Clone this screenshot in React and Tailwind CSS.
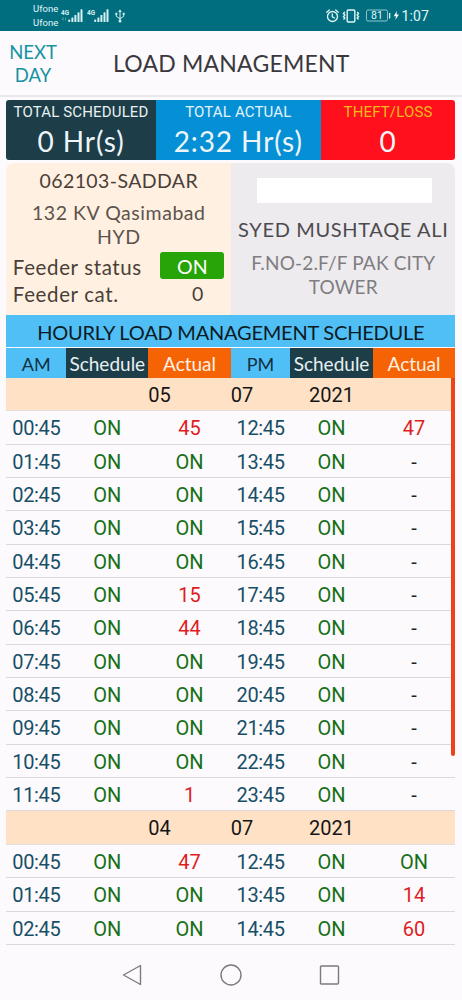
import React from "react";
import clsx from "clsx";

const days = [
  {
    date: ["05", "07", "2021"],
    rows: [
      ["00:45", "ON", "45", "12:45", "ON", "47"],
      ["01:45", "ON", "ON", "13:45", "ON", "-"],
      ["02:45", "ON", "ON", "14:45", "ON", "-"],
      ["03:45", "ON", "ON", "15:45", "ON", "-"],
      ["04:45", "ON", "ON", "16:45", "ON", "-"],
      ["05:45", "ON", "15", "17:45", "ON", "-"],
      ["06:45", "ON", "44", "18:45", "ON", "-"],
      ["07:45", "ON", "ON", "19:45", "ON", "-"],
      ["08:45", "ON", "ON", "20:45", "ON", "-"],
      ["09:45", "ON", "ON", "21:45", "ON", "-"],
      ["10:45", "ON", "ON", "22:45", "ON", "-"],
      ["11:45", "ON", "1", "23:45", "ON", "-"],
    ],
  },
  {
    date: ["04", "07", "2021"],
    rows: [
      ["00:45", "ON", "47", "12:45", "ON", "ON"],
      ["01:45", "ON", "ON", "13:45", "ON", "14"],
      ["02:45", "ON", "ON", "14:45", "ON", "60"],
    ],
  },
];

const columns = "grid grid-cols-[60px_82px_82.5px_59.5px_82.5px_82.5px]";

const cellColor = (value) => {
  if (value === "ON") return "text-[#176f17]";
  if (value === "-") return "text-[#222222]";
  return value.includes(":") ? "text-[#174f66] tracking-[-0.35px]" : "text-[#df1d1f]";
};

const Signal = ({ dim }) => (
  <svg width="22" height="16" viewBox="0 0 22 16" fill="#d5f1f3">
    <text x="0" y="6.5" fontSize="7" fontWeight="700" fontFamily="Roboto" textLength="8" lengthAdjust="spacingAndGlyphs">4G</text>
    {dim && <path d="M2 9v3m-1-1 1 1.5M4.5 12.500V9.500" stroke="#4d9fae" strokeWidth="1" fill="none" />}
    <rect x="7.200" y="11.500" width="2" height="2.500" rx=".8" />
    <rect x="10.400" y="9.500" width="2" height="4.500" rx=".6" />
    <rect x="13.400" y="7" width="2" height="7" rx=".6" />
    <rect x="16.500" y="4.300" width="2" height="9.700" rx=".6" />
    <rect x="19.500" y="1.200" width="2" height="12.800" rx=".6" />
  </svg>
);

const UsbIcon = () => (
  <svg width="10" height="14" viewBox="0 0 10 14" fill="none" stroke="#d5f1f3" strokeWidth="1">
    <path d="M5 2v10M1.300 5v2.300L5 9.800M8.700 5v2.300L5 9.800" />
    <path d="M3.300 3 5 .3 6.700 3zM.3 3.800h2v2h-2zM7.700 3.800h2v2h-2z" fill="#d5f1f3" stroke="none" />
    <circle cx="5" cy="12" r="1.500" fill="#d5f1f3" stroke="none" />
  </svg>
);

const AlarmIcon = () => (
  <svg width="13" height="14" viewBox="0 0 13 14" fill="none" stroke="#e3f6f7" strokeWidth="1.300" strokeLinecap="round">
    <circle cx="6.500" cy="7.500" r="5" />
    <path d="M6.300 4.800v3l2.200 1.200M.8 3.200l2.500-2.200M12.200 3.200 9.700 1" />
  </svg>
);

const VibrateIcon = () => (
  <svg width="18" height="14" viewBox="0 0 18 14" fill="none" stroke="#e3f6f7" strokeWidth="1.400">
    <rect x="5.200" y="1" width="7.600" height="12" rx="1" />
    <path d="M2.800 3 1.500 4.500l1.300 1.500-1.300 1.500 1.300 1.500-1.300 1.500M15.200 3l1.300 1.500L15.200 6l1.300 1.500L15.200 9l1.300 1.500" />
  </svg>
);

const BatteryIcon = () => (
  <svg width="34" height="13" viewBox="0 0 34 13">
    <rect x=".5" y="1" width="21" height="11" rx="1.500" fill="none" stroke="#8fc6ce" />
    <rect x="23" y="4" width="1.300" height="5.500" fill="#d5f1f3" />
    <text x="11" y="10.400" textAnchor="middle" fontSize="10.500" fontFamily="Roboto" fill="#e3f6f7">81</text>
    <path d="M30.800 2 27.800 7.200h2.200L29.300 11l3.600-5.400h-2.300z" fill="#fff" />
  </svg>
);

const StatusBar = () => (
  <div className="h-[31px] shrink-0 bg-[#006e7f] flex items-center text-[#e3f6f7]">
    <div className="ml-[33px] w-[27px] text-[9.500px] leading-[13.500px] whitespace-nowrap">
      <p>Ufone</p>
      <p>Ufone</p>
    </div>
    <div className="ml-[1px] flex items-center gap-1">
      <Signal dim />
      <Signal />
    </div>
    <div className="ml-[6px]"><UsbIcon /></div>
    <div className="ml-auto mr-[33px] flex items-center">
      <AlarmIcon />
      <span className="ml-[3px]"><VibrateIcon /></span>
      <span className="ml-[6px]"><BatteryIcon /></span>
      <span className="ml-[2px] text-[14px] leading-none tracking-[0.1px]">1:07</span>
    </div>
  </div>
);

const Total = ({ label, value, className }) => (
  <div className={clsx("pt-[3px] text-center whitespace-nowrap", className)}>
    <p className="text-[15px] leading-[19px] tracking-[0.15px]">{label}</p>
    <p className="mt-[3px] font-['Lato'] text-[28px] leading-[32px] tracking-[0.900px] text-[#eef5f8]">{value}</p>
  </div>
);

const HeadCell = ({ children, className }) => (
  <div className={clsx("text-center whitespace-nowrap", className)}>{children}</div>
);

const DateRow = ({ date }) => (
  <div className={clsx(columns, "h-[33.350px] bg-[#ffe2c6] border-b border-[#e2dfdd] leading-[35px] text-[#151515]")}>
    <span className="col-start-3">{date[0]}</span>
    <span className="col-start-4">{date[1]}</span>
    <span className="col-start-5 text-center">{date[2]}</span>
  </div>
);

const Row = ({ cells }) => (
  <div className={clsx(columns, "h-[33.350px] border-b border-[#dadade] leading-[35px] text-center")}>
    {cells.map((value, i) => (
      <span key={i} className={cellColor(value)}>{value}</span>
    ))}
  </div>
);

const App = () => {
  return (
    <div className="w-[462px] h-[1000px] overflow-hidden bg-[#fcfafd] font-['Roboto',sans-serif] flex flex-col">
      <StatusBar />

      <header className="h-[66px] shrink-0 border-b-2 border-[#e9e7e9] flex items-center font-['Lato']">
        <button className="w-[66px] text-center text-[18.500px] leading-[23px] text-[#1592a3] pt-[1px]">
          NEXT<br />DAY
        </button>
        <h1 className="ml-[47px] pt-[1px] text-[23px] tracking-[0.200px] text-[#3a383c] whitespace-nowrap">LOAD MANAGEMENT</h1>
      </header>

      <main className="ml-[6.300px] mt-[3px] w-[449px]">
        <section className="h-[60px] flex rounded-[3px] overflow-hidden">
          <Total label="TOTAL SCHEDULED" value="0 Hr(s)" className="w-[149.500px] bg-[#1d3e48] text-[#e8f0f2]" />
          <Total label="TOTAL ACTUAL" value="2:32 Hr(s)" className="w-[165px] bg-[#0590d6] text-[#e2f3fb]" />
          <Total label="THEFT/LOSS" value="0" className="flex-1 bg-[#ff101c] text-[#f5b81c]" />
        </section>

        <section className="mt-[3px] h-[152px] flex font-['Lato']">
          <div className="w-[225px] bg-[#fff0e1] rounded-tl-[8px] text-[19.500px] text-[#4a3f38] whitespace-nowrap">
            <p className="mt-[6px] text-center leading-[24px] tracking-[0.400px]">062103-SADDAR</p>
            <p className="mt-[8px] text-center leading-[24px] tracking-[0.550px] text-[#5c534d]">132 KV Qasimabad<br />HYD</p>
            <div className="mt-[3px] pl-[6.500px] pr-[7px] flex justify-between items-center h-[27px]">
              <span className="pt-[3px] text-[20.500px] tracking-[0.630px]">Feeder status</span>
              <span className="w-[64px] h-[27px] leading-[29px] rounded-[3px] bg-[#27a508] text-white text-center">ON</span>
            </div>
            <div className="pl-[6.500px] pt-[3px] flex items-center h-[27px]">
              <span className="text-[20.500px] tracking-[0.630px]">Feeder cat.</span>
              <span className="ml-auto mr-[28px]">0</span>
            </div>
          </div>
          <div className="flex-1 bg-[#edebee] rounded-tr-[8px] text-center whitespace-nowrap">
            <div className="mt-[15px] ml-[26px] w-[175px] h-[25px] bg-white" />
            <p className="mt-[14px] text-[20px] leading-[24px] tracking-[0.650px] text-[#4c4a4e]">SYED MUSHTAQE ALI</p>
            <p className="mt-[10px] text-[19px] leading-[24px] tracking-[0.150px] text-[#7f7d81]">F.NO-2.F/F PAK CITY<br />TOWER</p>
          </div>
        </section>

        <h2 className="h-[32px] bg-[#4fbff6] text-center font-['Lato'] text-[20px] leading-[34px] tracking-[-0.220px] text-[#0c1a22] whitespace-nowrap">
          HOURLY LOAD MANAGEMENT SCHEDULE
        </h2>

        <div className={clsx(columns, "mt-[1px] h-[30px] font-['Lato'] text-[19px] leading-[32px]")}>
          <HeadCell className="bg-[#4fbff6] text-[18px] text-[#12303f]">AM</HeadCell>
          <HeadCell className="bg-[#1d3e48] text-[#e8f0f2]">Schedule</HeadCell>
          <HeadCell className="bg-[#f66305] text-[#fff0e2]">Actual</HeadCell>
          <HeadCell className="bg-[#4fbff6] text-[18px] text-[#12303f]">PM</HeadCell>
          <HeadCell className="bg-[#1d3e48] text-[#e8f0f2]">Schedule</HeadCell>
          <HeadCell className="bg-[#f66305] text-[#fff0e2]">Actual</HeadCell>
        </div>

        <div className="relative text-[20px]">
          {days.map((day) => (
            <div key={day.date[0]}>
              <DateRow date={day.date} />
              {day.rows.map((cells) => (
                <Row key={cells[0]} cells={cells} />
              ))}
            </div>
          ))}
          <div className="absolute right-0 top-0 w-[4px] h-[378px] rounded-b-[2px] bg-[#ee4318]" />
        </div>
      </main>

      <nav className="mt-auto h-[50px] shrink-0 flex justify-center items-center gap-[76px]">
        <svg width="22" height="24" viewBox="0 0 22 24" fill="none" stroke="#7c7a7e" strokeWidth="1.400" strokeLinejoin="round">
          <path d="M19.500 2.500v19L2.500 12z" />
        </svg>
        <svg width="24" height="24" viewBox="0 0 24 24" fill="none" stroke="#7c7a7e" strokeWidth="1.400">
          <circle cx="12" cy="12" r="10" />
        </svg>
        <svg width="22" height="24" viewBox="0 0 22 24" fill="none" stroke="#7c7a7e" strokeWidth="1.400">
          <rect x="1.500" y="3" width="18" height="18" rx="1" />
        </svg>
      </nav>
    </div>
  );
};

export default App;
